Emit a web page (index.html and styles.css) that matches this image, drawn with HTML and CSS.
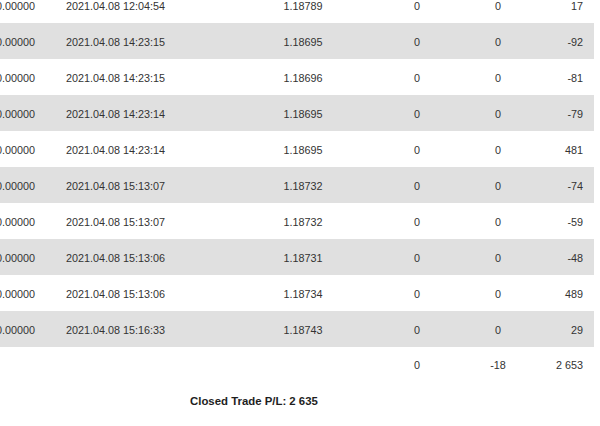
FILE: index.html
```html
<!DOCTYPE html>
<html>
<head>
<meta charset="utf-8">
<link rel="stylesheet" href="styles.css">
</head>
<body>
<div class="page">
  <div class="table">
    <div class="row"><span class="c a">0.00000</span><span class="c b">2021.04.08 12:04:54</span><span class="c m">1.18789</span><span class="c m">0</span><span class="c m">0</span><span class="c f">17</span></div>
    <div class="row alt"><span class="c a">0.00000</span><span class="c b">2021.04.08 14:23:15</span><span class="c m">1.18695</span><span class="c m">0</span><span class="c m">0</span><span class="c f">-92</span></div>
    <div class="row"><span class="c a">0.00000</span><span class="c b">2021.04.08 14:23:15</span><span class="c m">1.18696</span><span class="c m">0</span><span class="c m">0</span><span class="c f">-81</span></div>
    <div class="row alt"><span class="c a">0.00000</span><span class="c b">2021.04.08 14:23:14</span><span class="c m">1.18695</span><span class="c m">0</span><span class="c m">0</span><span class="c f">-79</span></div>
    <div class="row"><span class="c a">0.00000</span><span class="c b">2021.04.08 14:23:14</span><span class="c m">1.18695</span><span class="c m">0</span><span class="c m">0</span><span class="c f">481</span></div>
    <div class="row alt"><span class="c a">0.00000</span><span class="c b">2021.04.08 15:13:07</span><span class="c m">1.18732</span><span class="c m">0</span><span class="c m">0</span><span class="c f">-74</span></div>
    <div class="row"><span class="c a">0.00000</span><span class="c b">2021.04.08 15:13:07</span><span class="c m">1.18732</span><span class="c m">0</span><span class="c m">0</span><span class="c f">-59</span></div>
    <div class="row alt"><span class="c a">0.00000</span><span class="c b">2021.04.08 15:13:06</span><span class="c m">1.18731</span><span class="c m">0</span><span class="c m">0</span><span class="c f">-48</span></div>
    <div class="row"><span class="c a">0.00000</span><span class="c b">2021.04.08 15:13:06</span><span class="c m">1.18734</span><span class="c m">0</span><span class="c m">0</span><span class="c f">489</span></div>
    <div class="row alt"><span class="c a">0.00000</span><span class="c b">2021.04.08 15:16:33</span><span class="c m">1.18743</span><span class="c m">0</span><span class="c m">0</span><span class="c f">29</span></div>
    <div class="row total"><span class="c a"></span><span class="c b"></span><span class="c m"></span><span class="c m">0</span><span class="c m">-18</span><span class="c f">2 653</span></div>
  </div>
  <div class="summary">Closed Trade P/L: 2 635</div>
</div>
</body>
</html>
```

FILE: styles.css
```css
html, body {
  margin: 0;
  padding: 0;
  background: #ffffff;
  overflow: hidden;
}
body {
  width: 600px;
  height: 426px;
  font-family: "Liberation Sans", Arial, sans-serif;
  color: #333333;
}
.page {
  margin-top: -13px;
}
.table {
  margin-left: -20px;
  width: 614px;
  font-size: 10.8px;
}
.row {
  display: grid;
  grid-template-columns: 70px 180px 146px 82px 80px 56px;
  height: 36px;
  box-sizing: border-box;
  padding-top: 2px;
  align-items: center;
  white-space: nowrap;
}
.row.alt {
  background: #e0e0e0;
}
.row.total {
  height: 34px;
}
.c.a {
  text-align: right;
  padding-right: 15px;
}
.c.b {
  text-align: left;
  padding-left: 16px;
}
.c.m {
  text-align: center;
}
.c.f {
  text-align: right;
  padding-right: 11px;
}
.summary {
  padding-left: 190px;
  margin-top: 14px;
  font-size: 11.4px;
  font-weight: bold;
  color: #1e1e1e;
}
```
